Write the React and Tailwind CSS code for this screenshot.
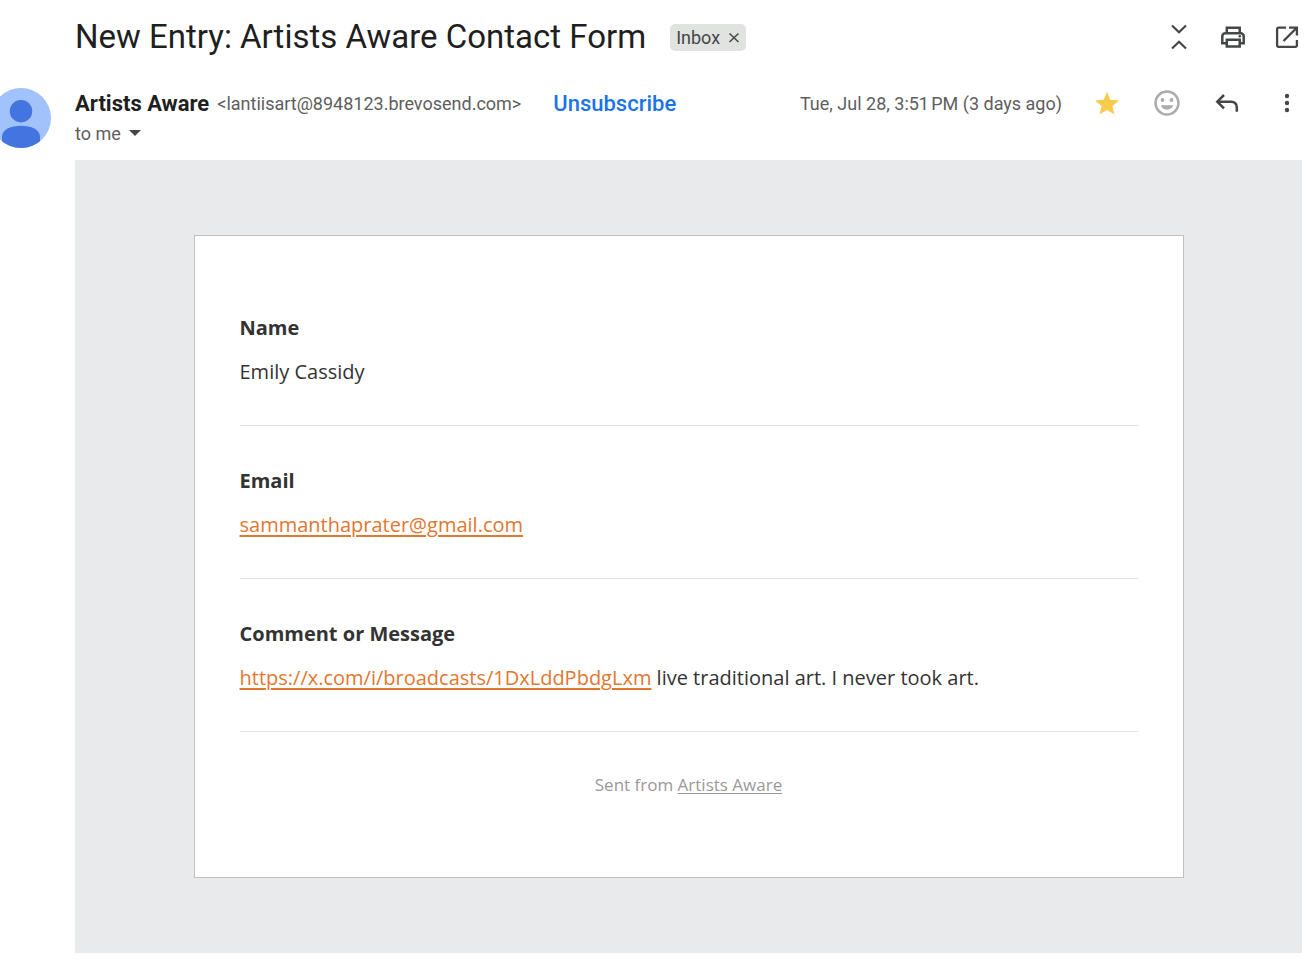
import React from "react";

const iconButton = "flex size-[30px] shrink-0 items-center justify-center";

function CollapseIcon() {
  return (
    <svg viewBox="0 0 30 30" className="size-[30px]" fill="none" stroke="#444746" strokeWidth="2.2" aria-hidden="true">
      <path d="M8 3.5l7 6.7 7-6.7M8 26.5l7-6.7 7 6.7" />
    </svg>
  );
}

function PrintIcon() {
  return (
    <svg viewBox="0 0 30 30" className="size-[30px]" fill="none" stroke="#444746" strokeWidth="2.5" aria-hidden="true">
      <path d="M8.8 10.5V5.8h12.9v4.7" />
      <path d="M8.2 21.2H4.3v-6.9a3 3 0 0 1 3-3h15.4a3 3 0 0 1 3 3v6.9h-3.9" />
      <path d="M8.8 17.8h12.9v6.6H8.8z" />
      <circle cx="21.8" cy="14.3" r="1.3" fill="#444746" stroke="none" />
    </svg>
  );
}

function OpenIcon() {
  return (
    <svg viewBox="0 0 30 30" className="size-[30px]" fill="none" stroke="#444746" strokeWidth="2.3" aria-hidden="true">
      <path d="M14 5.6H6.6A1.5 1.5 0 0 0 5.1 7.1v16.3a1.5 1.5 0 0 0 1.5 1.5h16.8a1.5 1.5 0 0 0 1.5-1.5V18" />
      <path d="M17 5.6h7.9v8M24.5 6L11.500 19" />
    </svg>
  );
}

function StarIcon() {
  return (
    <svg viewBox="0 0 30 30" className="size-[30px]" fill="#f7cb4d" aria-hidden="true">
      <path d="M15 3.800l3.300 7.900 8.600.700-6.500 5.600 2 8.300-7.400-4.400-7.400 4.400 2-8.300-6.500-5.600 8.600-.700z" />
    </svg>
  );
}

function SmileIcon() {
  return (
    <svg viewBox="0 0 30 30" className="size-[30px]" aria-hidden="true">
      <circle cx="15" cy="15" r="11.500" fill="none" stroke="#acacac" strokeWidth="2.500" />
      <circle cx="10.500" cy="12" r="1.900" fill="#acacac" />
      <circle cx="19.500" cy="12" r="1.900" fill="#acacac" />
      <path d="M8.800 17.300h12.400a6.600 6.600 0 0 1-12.400 0z" fill="#acacac" />
    </svg>
  );
}

function ReplyIcon() {
  return (
    <svg viewBox="0 0 30 30" className="size-[30px]" fill="none" stroke="#444746" strokeWidth="2.500" aria-hidden="true">
      <path d="M12 7l-6.700 6.700L12 20.400" />
      <path d="M5.500 13.700H19.500a5.300 5.300 0 0 1 5.300 5.300v4.700" />
    </svg>
  );
}

function MoreIcon() {
  return (
    <svg viewBox="0 0 30 30" className="size-[30px]" fill="#444746" aria-hidden="true">
      <circle cx="15" cy="8" r="2.200" />
      <circle cx="15" cy="15" r="2.200" />
      <circle cx="15" cy="22" r="2.200" />
    </svg>
  );
}

function Avatar() {
  return (
    <svg viewBox="0 0 60 60" className="-ml-[9px] size-[60px] shrink-0" role="img" aria-label="Artists Aware">
      <clipPath id="avatar-disc">
        <circle cx="30" cy="30" r="30" />
      </clipPath>
      <g clipPath="url(#avatar-disc)">
        <rect width="60" height="60" fill="#a1c2fa" />
        <circle cx="30" cy="23.200" r="11.200" fill="#4374e0" />
        <path d="M11 49c0-7.500 9-11.200 19-11.200S49 41.500 49 49v11H11z" fill="#4374e0" />
      </g>
    </svg>
  );
}

function Field({ label, children }) {
  return (
    <section className="border-b border-[#e2e2e2] pt-[39px] pb-[37px] text-[20px] leading-8 text-[#333333]">
      <h2 className="font-bold">{label}</h2>
      <p className="mt-3 break-words">{children}</p>
    </section>
  );
}

const orangeLink = "text-[#e27730] underline decoration-2 underline-offset-3";

export default function App() {
  return (
    <main className="min-h-screen bg-white pr-[10px] pb-2 font-['Roboto',sans-serif] text-[#1f1f1f]">
      <header className="flex items-center pt-[17px] pl-[75px]">
        <h1 className="text-[33px] leading-10">New Entry: Artists Aware Contact Form</h1>
        <span className="ml-6 flex h-[27px] shrink-0 items-center rounded-[5px] bg-[#e1e3e1] px-[6px] text-[18px] text-[#444746]">
          Inbox
          <button type="button" aria-label="Remove label Inbox" className="ml-2 flex size-3 items-center justify-center">
            <svg viewBox="0 0 12 12" className="size-3" fill="none" stroke="#444746" strokeWidth="1.500" aria-hidden="true">
              <path d="M1.500 2.500l9 8.500M10.500 2.500l-9 8.500" />
            </svg>
          </button>
        </span>
        <div className="ml-auto flex gap-6">
          <button type="button" aria-label="Collapse all" className={iconButton}><CollapseIcon /></button>
          <button type="button" aria-label="Print all" className={iconButton}><PrintIcon /></button>
          <button type="button" aria-label="In new window" className={iconButton}><OpenIcon /></button>
        </div>
      </header>

      <div className="mt-[31px] flex items-start gap-6">
        <Avatar />
        <div className="min-w-0 flex-1 text-[18px] text-[#5e5e5e]">
          <div className="flex h-[30px] items-center whitespace-nowrap">
            <h2 className="text-[22px] font-bold text-[#1f1f1f]">Artists Aware</h2>
            <span className="ml-2">&lt;lantiisart@8948123.brevosend.com&gt;</span>
            <a href="#unsubscribe" className="ml-8 text-[22px] font-medium text-[#1a73e8]">Unsubscribe</a>
            <time className="ml-auto">Tue, Jul 28, 3:51&#8239;PM (3 days ago)</time>
            <div className="ml-[30px] flex gap-[30px]">
              <button type="button" aria-label="Starred" className={iconButton}><StarIcon /></button>
              <button type="button" aria-label="Add reaction" className={iconButton}><SmileIcon /></button>
              <button type="button" aria-label="Reply" className={iconButton}><ReplyIcon /></button>
              <button type="button" aria-label="More" className={iconButton}><MoreIcon /></button>
            </div>
          </div>
          <button type="button" aria-label="Show details" className="flex h-[30px] items-center gap-2">
            to me
            <svg viewBox="0 0 12 6" className="h-[6px] w-3" fill="#444746" aria-hidden="true">
              <path d="M0 0h12L6 6z" />
            </svg>
          </button>
        </div>
      </div>

      <div className="mt-3 ml-[75px] bg-[#e8eaeb] px-5 py-[75px] font-['Open_Sans',sans-serif]">
        <article className="mx-auto max-w-[990px] border border-[#c1c1c1] bg-white px-[45px] pt-[37px] pb-20">
          <Field label="Name">Emily Cassidy</Field>
          <Field label="Email">
            <a href="mailto:sammanthaprater@gmail.com" className={orangeLink}>sammanthaprater@gmail.com</a>
          </Field>
          <Field label="Comment or Message">
            <a href="https://x.com/i/broadcasts/1DxLddPbdgLxm" className={orangeLink}>https://x.com/i/broadcasts/1DxLddPbdgLxm</a>
            {" live traditional art. I never took art."}
          </Field>
          <footer className="mt-[41px] text-center text-[17px] leading-6 text-[#999999]">
            Sent from <a href="#artists-aware" className="underline underline-offset-2">Artists Aware</a>
          </footer>
        </article>
      </div>
    </main>
  );
}
